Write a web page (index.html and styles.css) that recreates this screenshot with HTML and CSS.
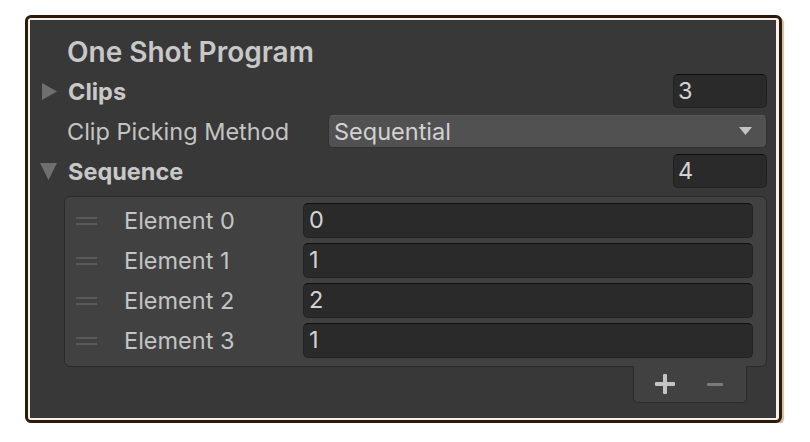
FILE: index.html
```html
<!DOCTYPE html>
<html>
<head>
<meta charset="utf-8">
<link rel="stylesheet" href="styles.css">
</head>
<body>
<div class="frame">
  <div class="panel">
    <div class="heading">One Shot Program</div>
    <div class="row">
      <span class="foldout"><svg width="15" height="17" viewBox="0 0 15 17"><polygon points="0,0 15,8.5 0,17" fill="#6f6f6f"/></svg></span>
      <span class="label bold">Clips</span>
      <span class="spacer"></span>
      <span class="field count">3</span>
    </div>
    <div class="row">
      <span class="label plain">Clip Picking Method</span>
      <span class="dropdown"><span>Sequential</span><svg width="13" height="8" viewBox="0 0 13 8"><polygon points="0,0 13,0 6.5,8" fill="#c4c4c4"/></svg></span>
    </div>
    <div class="row">
      <span class="foldout down"><svg width="17" height="17" viewBox="0 0 17 17"><polygon points="0,0 17,0 8.5,17" fill="#6f6f6f"/></svg></span>
      <span class="label bold">Sequence</span>
      <span class="spacer"></span>
      <span class="field count">4</span>
    </div>
    <div class="list">
      <div class="item"><span class="handle"></span><span class="elabel">Element 0</span><span class="field wide">0</span></div>
      <div class="item"><span class="handle"></span><span class="elabel">Element 1</span><span class="field wide">1</span></div>
      <div class="item"><span class="handle"></span><span class="elabel">Element 2</span><span class="field wide">2</span></div>
      <div class="item"><span class="handle"></span><span class="elabel">Element 3</span><span class="field wide">1</span></div>
    </div>
    <div class="footer-wrap">
      <div class="footer">
        <span class="btn plus"></span>
        <span class="btn minus"></span>
      </div>
    </div>
  </div>
</div>
</body>
</html>
```

FILE: styles.css
```css
html, body {
  margin: 0;
  padding: 0;
  background: #ffffff;
}
body {
  font-family: Inter, "Noto Sans", sans-serif;
  color: #c4c4c4;
}
.frame {
  margin: 15px 0 0 25px;
  width: 746px;
  border: 3px solid #2d1a08;
  border-radius: 6px;
  padding: 2px 3px 2px 2px;
  background: #f4f1ec;
  box-shadow: 2px 2px 1px #cdbfa8;
}
.panel {
  background: #383838;
  height: 398px;
  width: 746px;
  display: flex;
  flex-direction: column;
}
.heading {
  padding: 14px 0 0 37px;
  height: 37px;
  line-height: 36px;
  font-size: 28px;
  font-weight: 600;
  color: #c8c8c8;
}
.row {
  height: 40px;
  display: flex;
  align-items: center;
  padding-right: 9px;
}
.foldout {
  width: 17px;
  margin-left: 12px;
  margin-right: 9px;
  display: flex;
  align-items: center;
}
.foldout.down {
  margin-left: 10px;
  margin-right: 11px;
}
.label {
  font-size: 23.5px;
}
.label.bold {
  font-weight: 700;
  color: #c8c8c8;
}
.label.plain {
  margin-left: 37px;
  width: 261px;
}
.spacer {
  flex: 1;
}
.field {
  box-sizing: border-box;
  height: 34px;
  background: #2a2a2a;
  border: 1px solid #212121;
  border-top-color: #0f0f0f;
  border-radius: 5px;
  font-size: 23.5px;
  line-height: 32px;
  padding-left: 4px;
  color: #d2d2d2;
}
.count {
  width: 94px;
}
.dropdown {
  box-sizing: border-box;
  flex: 1;
  height: 33px;
  background: #515151;
  border: 1px solid #303030;
  border-top-color: #585858;
  border-radius: 5px;
  display: flex;
  align-items: center;
  justify-content: space-between;
  padding: 0 14px 0 5px;
  font-size: 23.5px;
  color: #d2d2d2;
}
.list {
  margin: 5px 9px 0 34px;
  background: #414141;
  border: 1px solid #2a2a2a;
  border-radius: 6px;
  padding: 6px 13px 8px 11px;
  display: flex;
  flex-direction: column;
  gap: 5px;
}
.item {
  height: 35px;
  display: flex;
  align-items: center;
}
.handle {
  width: 21px;
  height: 8px;
  box-sizing: border-box;
  border-top: 2px solid #5a5a5a;
  border-bottom: 2px solid #5a5a5a;
  margin-right: 27px;
}
.elabel {
  font-size: 23.5px;
  width: 179px;
}
.field.wide {
  flex: 1;
  height: 35px;
  padding-left: 5px;
}
.footer-wrap {
  display: flex;
  justify-content: flex-end;
  padding-right: 29px;
}
.footer {
  margin-top: -1px;
  width: 114px;
  height: 37px;
  box-sizing: border-box;
  background: #414141;
  border: 1px solid #2a2a2a;
  border-top: none;
  border-radius: 0 0 5px 5px;
  display: flex;
  align-items: center;
  padding-left: 21px;
  gap: 32px;
}
.btn {
  position: relative;
  display: block;
}
.plus {
  width: 20px;
  height: 20px;
}
.plus::before, .plus::after {
  content: "";
  position: absolute;
  background: #c4c4c4;
  border-radius: 1px;
}
.plus::before {
  left: 0; right: 0; top: 8px; height: 4px;
}
.plus::after {
  top: 0; bottom: 0; left: 8px; width: 4px;
}
.minus {
  width: 16px;
  height: 3px;
  background: #7a7a7a;
  border-radius: 1px;
}
```
